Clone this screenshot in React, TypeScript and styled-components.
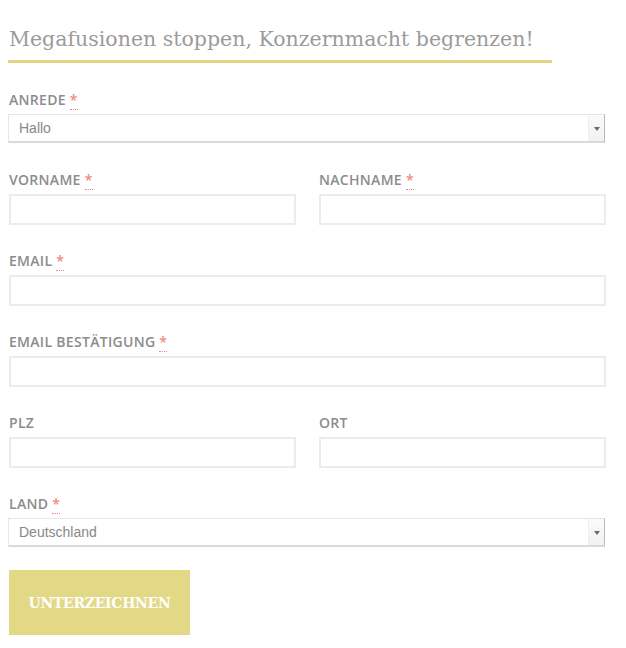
import { createGlobalStyle, styled } from "styled-components";

const GlobalStyle = createGlobalStyle`
  html, body {
    margin: 0;
    padding: 0;
    background: #ffffff;
  }
  * {
    box-sizing: border-box;
  }
`;

type Field = {
  name: string;
  label: string;
  required?: boolean;
};

const App = (): JSX.Element => {
  const row = (fields: Field[]) => (
    <Row cols={fields.length}>
      {fields.map((f) => (
        <Group key={f.name}>
          <Label htmlFor={f.name}>
            {f.label}
            {f.required && (
              <>
                {" "}
                <Req title="required">*</Req>
              </>
            )}
          </Label>
          <Input id={f.name} type="text" />
        </Group>
      ))}
    </Row>
  );

  return (
    <>
      <GlobalStyle />
      <Container>
        <Title>Megafusionen stoppen, Konzernmacht begrenzen!</Title>
        <Form onSubmit={(e) => e.preventDefault()}>
          <Group>
            <Label htmlFor="anrede">
              ANREDE <Req title="required">*</Req>
            </Label>
            <SelectWrap>
              <Select id="anrede" defaultValue="Hallo">
                <option>Hallo</option>
                <option>Frau</option>
                <option>Herr</option>
              </Select>
              <Arrow />
            </SelectWrap>
          </Group>

          {row([
            { name: "vorname", label: "VORNAME", required: true },
            { name: "nachname", label: "NACHNAME", required: true },
          ])}
          {row([{ name: "email", label: "EMAIL", required: true }])}
          {row([
            { name: "email2", label: "EMAIL BESTÄTIGUNG", required: true },
          ])}
          {row([
            { name: "plz", label: "PLZ" },
            { name: "ort", label: "ORT" },
          ])}

          <Group>
            <Label htmlFor="land">
              LAND <Req title="required">*</Req>
            </Label>
            <SelectWrap>
              <Select id="land" defaultValue="Deutschland">
                <option>Deutschland</option>
                <option>Österreich</option>
                <option>Schweiz</option>
              </Select>
              <Arrow />
            </SelectWrap>
          </Group>

          <Button type="submit">UNTERZEICHNEN</Button>
        </Form>
      </Container>
    </>
  );
};

export default App;

const Container = styled.div`
  width: 597px;
  margin-left: 8px;
  padding-top: 26px;
`;

const Title = styled.h2`
  width: 544px;
  margin: 0;
  padding: 0 0 8px 1px;
  border-bottom: 3px solid #e3d682;
  font-family: "DejaVu Serif", serif;
  font-weight: 400;
  font-size: 20.5px;
  line-height: 26px;
  color: #9b9b9b;
`;

const Form = styled.form`
  display: flex;
  flex-direction: column;
  gap: 27px;
  padding-top: 28px;
`;

const Row = styled.div<{ cols: number }>`
  display: grid;
  grid-template-columns: repeat(${(p) => p.cols}, 1fr);
  column-gap: 23px;
`;

const Group = styled.div`
  display: flex;
  flex-direction: column;
`;

const Label = styled.label`
  display: block;
  margin: 0 0 5px 1px;
  font-family: "Open Sans", sans-serif;
  font-weight: 600;
  font-size: 14px;
  letter-spacing: 0.3px;
  line-height: 18px;
  color: #8c8c8c;
`;

const Req = styled.abbr`
  color: #f08a80;
  text-decoration: none;
  border-bottom: 1px dotted #f08a80;
  cursor: help;
`;

const Input = styled.input`
  width: 100%;
  height: 31px;
  margin: 0 0 0 1px;
  padding: 0 10px;
  border: 2px solid #ececec;
  border-radius: 0;
  background: #ffffff;
  outline: none;
  font-family: "Liberation Sans", sans-serif;
  font-size: 14px;
  color: #777777;
`;

const SelectWrap = styled.div`
  position: relative;
  width: 100%;
  height: 30px;
`;

const Select = styled.select`
  appearance: none;
  width: 100%;
  height: 29px;
  margin: 0;
  padding: 0 24px 0 10px;
  border: 1px solid #e6e6e6;
  border-right: 1px solid #b9b9b9;
  border-bottom: 2px solid #dadada;
  border-radius: 0;
  background: #ffffff;
  outline: none;
  font-family: "Liberation Sans", sans-serif;
  font-size: 14px;
  color: #888888;
`;

const Arrow = styled.span`
  position: absolute;
  top: 1px;
  right: 1px;
  width: 16px;
  height: 26px;
  border-left: 1px solid #eeeeee;
  background: linear-gradient(#fbfbfb, #f1f1f1);
  pointer-events: none;

  &::after {
    content: "";
    position: absolute;
    left: 5px;
    top: 12px;
    border-left: 3px solid transparent;
    border-right: 3px solid transparent;
    border-top: 4px solid #6a6a6a;
  }
`;

const Button = styled.button`
  align-self: flex-start;
  width: 181px;
  height: 65px;
  margin: -5px 0 0 1px;
  border: none;
  border-radius: 0;
  background: #e3d886;
  color: #ffffff;
  font-family: "DejaVu Serif", serif;
  font-weight: 700;
  font-size: 14px;
  letter-spacing: -0.3px;
  cursor: pointer;

  &:hover {
    background: #d9cd72;
  }
`;
